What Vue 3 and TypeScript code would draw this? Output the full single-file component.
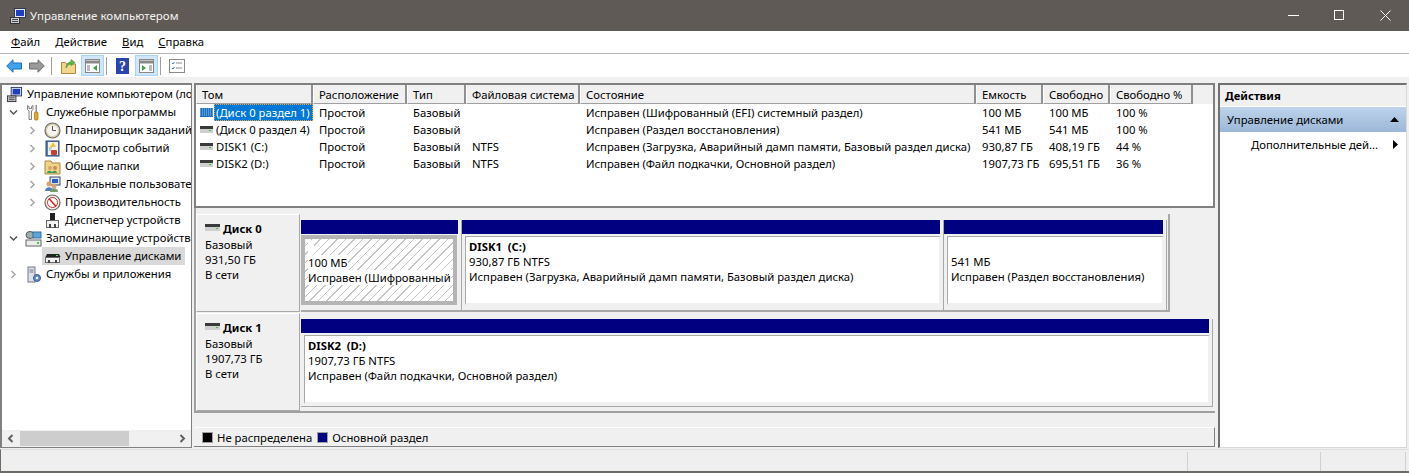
<script setup lang="ts">
const menus = [
  { k: 'Ф', r: 'айл' },
  { k: 'Д', r: 'ействие' },
  { k: 'В', r: 'ид' },
  { k: 'С', r: 'правка' }
]
const cols = [
  { t: 'Том', w: 117 }, { t: 'Расположение', w: 94 }, { t: 'Тип', w: 59 }, { t: 'Файловая система', w: 114 },
  { t: 'Состояние', w: 396 }, { t: 'Емкость', w: 67 }, { t: 'Свободно', w: 67 }, { t: 'Свободно %', w: 83 }
]
const rows = [
  ['(Диск 0 раздел 1)', 'Простой', 'Базовый', '', 'Исправен (Шифрованный (EFI) системный раздел)', '100 МБ', '100 МБ', '100 %'],
  ['(Диск 0 раздел 4)', 'Простой', 'Базовый', '', 'Исправен (Раздел восстановления)', '541 МБ', '541 МБ', '100 %'],
  ['DISK1 (C:)', 'Простой', 'Базовый', 'NTFS', 'Исправен (Загрузка, Аварийный дамп памяти, Базовый раздел диска)', '930,87 ГБ', '408,19 ГБ', '44 %'],
  ['DISK2 (D:)', 'Простой', 'Базовый', 'NTFS', 'Исправен (Файл подкачки, Основной раздел)', '1907,73 ГБ', '695,51 ГБ', '36 %']
]
const tree = [
  { t: 'Служебные программы', lvl: 1, a: 'open', i: 'tools' },
  { t: 'Планировщик заданий', lvl: 2, a: 'closed', i: 'clock' },
  { t: 'Просмотр событий', lvl: 2, a: 'closed', i: 'log' },
  { t: 'Общие папки', lvl: 2, a: 'closed', i: 'folder' },
  { t: 'Локальные пользователи и группы', lvl: 2, a: 'closed', i: 'users' },
  { t: 'Производительность', lvl: 2, a: 'closed', i: 'perf' },
  { t: 'Диспетчер устройств', lvl: 2, a: '', i: 'device' },
  { t: 'Запоминающие устройства', lvl: 1, a: 'open', i: 'storage' },
  { t: 'Управление дисками', lvl: 2, a: '', i: 'disk', sel: true },
  { t: 'Службы и приложения', lvl: 1, a: 'closed', i: 'services' }
]
</script>

<template>
  <div class="win">
    <header class="title">
      <svg class="ticon" width="18" height="18" viewBox="0 0 18 18">
        <rect x="5.500" y="1.500" width="11" height="9" fill="#e3e8f2" stroke="#2e3a58" />
        <rect x="7" y="3" width="8" height="6" fill="#1f3fc0" />
        <rect x="1.500" y="10.500" width="9" height="6" fill="#c9ccd2" stroke="#333" />
        <path d="M3 12.500h6M3 14.500h6" stroke="#444" />
      </svg>
      <span class="ttext">Управление компьютером</span>
      <div class="wbtns">
        <svg width="11" height="11" viewBox="0 0 11 11"><path d="M0 5.500h11" stroke="#fff" /></svg>
        <svg width="11" height="11" viewBox="0 0 11 11"><rect x=".5" y=".5" width="9" height="9" fill="none" stroke="#fff" /></svg>
        <svg width="11" height="11" viewBox="0 0 11 11"><path d="M.5.500l10 10M10.500.500l-10 10" stroke="#fff" /></svg>
      </div>
    </header>

    <nav class="menu">
      <span v-for="m in menus" :key="m.k"><u>{{ m.k }}</u>{{ m.r }}</span>
    </nav>

    <div class="toolbar">
      <svg class="t-back" width="16" height="14" viewBox="0 0 16 14"><path d="M.7 7L7 .8v3.200h8.500v6H7v3.200z" fill="#3fa3ee" stroke="#1e6fb5" /></svg>
      <svg class="t-fwd" width="16" height="14" viewBox="0 0 16 14"><path d="M15.300 7L9 .8v3.200H.5v6H9v3.200z" fill="#9a9a9a" stroke="#6c6c6c" /></svg>
      <i class="sep s-a"></i>
      <svg class="t-up" width="15" height="16" viewBox="0 0 15 16"><path d="M.5 4.500h4l1 1.500h9v9.500H.5z" fill="#f2d58a" stroke="#a98a3e" /><path d="M5 10c0-4 2.500-6 5-6.200V1.500l4 3-4 3V5.500c-2 .2-3.500 1.800-5 4.500z" fill="#5fb94d" stroke="#3c8a30" stroke-width=".6" /></svg>
      <span class="tbtn t-b1">
        <svg width="15" height="14" viewBox="0 0 15 14"><rect x=".5" y=".5" width="14" height="13" fill="#fff" stroke="#888" /><path d="M1 3h13" stroke="#888" stroke-width="3" /><rect x="2" y="6" width="3" height="6" fill="#bbb" /><path d="M12 6v6l-4-3z" fill="#3aa648" /></svg>
      </span>
      <i class="sep s-b"></i>
      <svg class="t-help" width="13" height="16" viewBox="0 0 13 16"><rect width="13" height="16" fill="#2c44b0" /><text x="6.500" y="13" text-anchor="middle" class="q">?</text></svg>
      <span class="tbtn t-b2">
        <svg width="15" height="14" viewBox="0 0 15 14"><rect x=".5" y=".5" width="14" height="13" fill="#fff" stroke="#888" /><path d="M1 3h13" stroke="#888" stroke-width="3" /><rect x="10" y="6" width="3" height="6" fill="#bbb" /><path d="M3 6v6l4-3z" fill="#3aa648" /></svg>
      </span>
      <i class="sep s-b2"></i>
      <svg class="t-list" width="16" height="14" viewBox="0 0 16 14"><rect x=".5" y=".5" width="15" height="13" fill="#fff" stroke="#8a8a8a" /><path d="M7 4h6M7 9h6" stroke="#8a8a8a" /><path d="M3 4l1 1 1.500-2M3 9l1 1 1.500-2" stroke="#3a79c8" fill="none" /></svg>
    </div>

    <main class="body">
      <aside class="left">
        <div class="treebox">
          <div class="tree">
            <div class="node root">
              <svg class="nicon" width="17" height="17" viewBox="0 0 18 18"><rect x="5.500" y="1.500" width="11" height="9" fill="#e3e8f2" stroke="#2e3a58" /><rect x="7" y="3" width="8" height="6" fill="#1f3fc0" /><rect x="1.500" y="10.500" width="9" height="6" fill="#c9ccd2" stroke="#333" /><path d="M3 12.500h6M3 14.500h6" stroke="#444" /></svg>
              <span class="lbl">Управление компьютером (локальный)</span>
            </div>
            <div v-for="n in tree" :key="n.t" class="node" :class="'l' + n.lvl">
              <span class="arrow">
                <svg v-if="n.a === 'open'" width="9" height="7" viewBox="0 0 9 7"><path d="M1 1.500l3.500 3.500 3.500-3.500" fill="none" stroke="#555" stroke-width="1.500" /></svg>
                <svg v-if="n.a === 'closed'" width="7" height="9" viewBox="0 0 7 9"><path d="M1.500 1l3.500 3.500-3.500 3.500" fill="none" stroke="#a6a6a6" stroke-width="1.500" /></svg>
              </span>
              <span class="item" :class="{ sel: n.sel }">
                <span class="ic">
                  <svg width="17" height="17" viewBox="0 0 17 17">
                    <g v-if="n.i === 'tools'"><path d="M2.500 1.500v4l1.500 1.500v8.500h2.500V7L8 5.500v-4l-1.500 1v2H4v-2z" fill="#f4f4f4" stroke="#666" stroke-width=".8" /><rect x="9.500" y="8" width="3.500" height="8" rx="1" fill="#e7a81d" stroke="#8a6410" stroke-width=".6" /><rect x="10.500" y="1" width="1.500" height="7" fill="#8f8f8f" /></g>
                    <g v-else-if="n.i === 'clock'"><circle cx="8.500" cy="8.500" r="7.500" fill="#d9cfb0" stroke="#6e6e6e" stroke-width="1.200" /><circle cx="8.500" cy="8.500" r="5.500" fill="#f5f4ee" /><path d="M8.500 4v4.500H12" stroke="#555" fill="none" /></g>
                    <g v-else-if="n.i === 'log'"><rect x="2" y="1" width="13" height="15" fill="#5c7fb0" stroke="#2e4a78" /><rect x="4" y="2" width="10" height="13" fill="#f5f2e6" /><path d="M5 8h3M5 10h2" stroke="#8aa" /><rect x="7" y="10" width="6" height="5" rx="1" fill="#c9403a" /><path d="M9 2l3 5H6z" fill="#edc23f" /></g>
                    <g v-else-if="n.i === 'folder'"><path d="M1 3h6l1 2h8v11H1z" fill="#f0d48a" stroke="#a98a3e" /><circle cx="6" cy="10" r="2" fill="#d9a26a" /><circle cx="11" cy="10" r="2" fill="#c98a5a" /><path d="M3 15c0-3 5-3 5 0zM8 15c0-3 5-3 5 0z" fill="#3a9a55" /></g>
                    <g v-else-if="n.i === 'users'"><rect x="6" y="1" width="10" height="8" fill="#dbe5f3" stroke="#3b4a6b" /><rect x="8" y="3" width="6" height="4" fill="#2b5ec4" /><circle cx="5" cy="8" r="2.500" fill="#d9a26a" /><path d="M1 15c0-5 8-5 8 0z" fill="#4b7fc0" /><circle cx="10" cy="10" r="2.500" fill="#d6a47a" /><path d="M6 16c0-5 8-5 8 0z" fill="#7a9a6a" /></g>
                    <g v-else-if="n.i === 'perf'"><circle cx="8.500" cy="8.500" r="7.500" fill="#efece2" stroke="#6e6e6e" stroke-width="1.200" /><circle cx="8.500" cy="8.500" r="5" fill="#fff" stroke="#c33" /><path d="M5 4.500l7 8" stroke="#c22" stroke-width="1.500" /></g>
                    <g v-else-if="n.i === 'device'"><rect x="6" y="1" width="5" height="7" fill="#222" /><rect x="2.500" y="8.500" width="12" height="7" fill="#f2f2f2" stroke="#666" /><rect x="5" y="12" width="2" height="4" fill="#444" /><rect x="10" y="12" width="2" height="4" fill="#444" /></g>
                    <g v-else-if="n.i === 'storage'"><ellipse cx="5" cy="5" rx="4" ry="3.500" fill="#9fb0a8" stroke="#556" /><rect x="8" y="2" width="8" height="6" fill="#5aa6e0" stroke="#3a6a9a" /><rect x="1" y="10" width="15" height="6" fill="#ececec" stroke="#666" /><rect x="12" y="12" width="2" height="2" fill="#4c4" /></g>
                    <g v-else-if="n.i === 'disk'"><path d="M3 6h12l1.500 3H1.500z" fill="#222" /><rect x="1.500" y="9.500" width="14" height="5" fill="#f2f2f2" stroke="#666" /><rect x="4" y="12" width="2" height="3" fill="#444" /><rect x="11" y="12" width="2" height="3" fill="#444" /><rect x="12" y="7" width="2" height="1" fill="#4e4" /></g>
                    <g v-else><rect x="3" y="1" width="7" height="15" fill="#dde2ea" stroke="#778" /><path d="M4.500 4h4M4.500 6h4" stroke="#778" /><circle cx="12" cy="12" r="3.500" fill="#5f8fd0" stroke="#3a5a90" /><circle cx="12" cy="12" r="1.200" fill="#fff" /></g>
                  </svg>
                </span>
                <span class="lbl">{{ n.t }}</span>
              </span>
            </div>
          </div>
          <div class="hscroll">
            <span class="sarrow"><svg width="7" height="9" viewBox="0 0 7 9"><path d="M5.500 1L2 4.500 5.500 8" fill="none" stroke="#606060" stroke-width="2" /></svg></span>
            <span class="thumb"></span>
            <span class="sarrow end"><svg width="7" height="9" viewBox="0 0 7 9"><path d="M1.500 1L5 4.500 1.500 8" fill="none" stroke="#606060" stroke-width="2" /></svg></span>
          </div>
        </div>
      </aside>

      <section class="center">
        <div class="table">
          <div class="thead">
            <div v-for="c in cols" :key="c.t" class="th" :style="{ width: c.w + 'px' }">{{ c.t }}</div>
          </div>
          <div v-for="(r, i) in rows" :key="i" class="tr">
            <div v-for="(v, j) in r" :key="j" class="td" :class="{ first: j === 0 }" :style="{ width: cols[j].w + 'px' }">
              <template v-if="j === 0">
                <svg class="dsk" width="13" height="9" viewBox="0 0 13 9">
                  <g v-if="i === 0"><rect width="13" height="9" fill="#1c6fbe" /><path d="M0 1h13M0 3h13M0 5h13M0 7h13" stroke="#9cc7ef" stroke-dasharray="1 1" /></g>
                  <g v-else><rect y="1" width="13" height="3" fill="#3a3a3a" /><rect y="4" width="13" height="4" fill="#cfcfcf" /><rect x="9" y="5" width="2" height="1" fill="#3cc43c" /></g>
                </svg>
                <span class="vol" :class="{ focus: i === 0 }">{{ v }}</span>
              </template>
              <template v-else>{{ v }}</template>
            </div>
          </div>
        </div>

        <div class="graph">
          <div class="disk">
            <div class="dhead">
              <div class="dname">
                <svg width="15" height="8" viewBox="0 0 15 8"><rect width="15" height="3" fill="#3a3a3a" /><rect y="3" width="15" height="4" fill="#cfcfcf" /><rect x="11" y="4" width="2" height="1" fill="#3cc43c" /></svg>
                <b>Диск 0</b>
              </div>
              <div>Базовый</div>
              <div>931,50 ГБ</div>
              <div>В сети</div>
            </div>
            <div class="parts p0">
              <div class="part" style="width:161px">
                <div class="bar"></div>
                <div class="hatch">
                  <div class="ptext"><span>&nbsp;&nbsp;</span><span>100 МБ</span><span>Исправен (Шифрованный</span></div>
                </div>
              </div>
              <div class="part" style="width:482px">
                <div class="bar"></div>
                <div class="frame">
                  <div class="ptext"><b>DISK1&nbsp; (C:)</b><span>930,87 ГБ NTFS</span><span>Исправен (Загрузка, Аварийный дамп памяти, Базовый раздел диска)</span></div>
                </div>
              </div>
              <div class="part" style="width:223px">
                <div class="bar"></div>
                <div class="frame">
                  <div class="ptext"><span>&nbsp;</span><span>541 МБ</span><span>Исправен (Раздел восстановления)</span></div>
                </div>
              </div>
            </div>
          </div>
          <div class="disk">
            <div class="dhead">
              <div class="dname">
                <svg width="15" height="8" viewBox="0 0 15 8"><rect width="15" height="3" fill="#3a3a3a" /><rect y="3" width="15" height="4" fill="#cfcfcf" /><rect x="11" y="4" width="2" height="1" fill="#3cc43c" /></svg>
                <b>Диск 1</b>
              </div>
              <div>Базовый</div>
              <div>1907,73 ГБ</div>
              <div>В сети</div>
            </div>
            <div class="parts p1">
              <div class="part" style="width:912px">
                <div class="bar"></div>
                <div class="frame">
                  <div class="ptext"><b>DISK2&nbsp; (D:)</b><span>1907,73 ГБ NTFS</span><span>Исправен (Файл подкачки, Основной раздел)</span></div>
                </div>
              </div>
            </div>
          </div>
        </div>

        <div class="legend">
          <i class="sw black"></i><span>Не распределена</span>
          <i class="sw navy"></i><span>Основной раздел</span>
        </div>
      </section>

      <aside class="actions">
        <div class="ahead">Действия</div>
        <div class="asub">
          <span>Управление дисками</span>
          <svg width="9" height="5" viewBox="0 0 9 5"><path d="M4.500 0L9 5H0z" fill="#000" /></svg>
        </div>
        <div class="aitem">
          <span>Дополнительные дей...</span>
          <svg width="5" height="9" viewBox="0 0 5 9"><path d="M0 0l5 4.500L0 9z" fill="#000" /></svg>
        </div>
      </aside>
    </main>

    <footer class="status">
      <span class="s1"></span><span class="s2"></span><span class="s3"></span>
    </footer>
  </div>
</template>

<style>
html, body { margin: 0; padding: 0; overflow: hidden; }
</style>

<style scoped>
.win {
  width: 1409px; height: 473px; box-sizing: border-box; display: flex; flex-direction: column;
  background: #f0f0f0; font: 11.300px/17px "Noto Sans", sans-serif; color: #000;
  border-bottom: 2px solid #6e6a66; overflow: hidden;
}
.title { height: 31px; flex: none; background: #5f5a55; display: flex; align-items: center; padding-left: 9px; color: #fff; }
.ticon { margin-right: 3px; flex: none; }
.ttext { color: #f2f2f2; font-size: 11.500px; }
.wbtns { margin-left: auto; display: flex; gap: 35px; margin-right: 18px; align-items: center; }
.menu { height: 23px; box-sizing: border-box; flex: none; background: #fff; display: flex; gap: 15px; align-items: center; padding: 0 0 2px 11px; border-bottom: 1px solid #b5b5c0; }
.toolbar { height: 23px; flex: none; background: #fff; display: flex; align-items: center; padding-left: 6px; margin-bottom: 6px; }
.t-fwd { margin-left: 7px; }
.sep { width: 1px; height: 18px; background: #a0a0a0; flex: none; }
.s-a { margin-left: 6px; }
.t-up { margin-left: 9px; }
.t-b1 { margin-left: 5px; }
.s-b { margin-left: 2px; }
.t-help { margin-left: 9px; }
.t-b2 { margin-left: 6px; }
.s-b2 { margin-left: 2px; }
.t-list { margin-left: 8px; }
.tbtn { width: 23px; height: 21px; background: #cfe6fb; border: 1px solid #a9d4f8; box-sizing: border-box; display: flex; align-items: center; justify-content: center; flex: none; }
.q { font: bold 14px "Liberation Serif", serif; fill: #fff; }
.body { flex: 1; display: flex; min-height: 0; }
.left { width: 192px; flex: none; margin-right: 2px; }
.treebox { height: 365px; box-sizing: border-box; background: #fff; border: 1px solid #808080; border-left-width: 2px; border-top-width: 2px; display: flex; flex-direction: column; }
.tree { flex: 1; overflow: hidden; }
.node { height: 18px; display: flex; align-items: center; white-space: nowrap; }
.root { padding-left: 4px; gap: 4px; }
.lbl { padding-bottom: 2px; }
.nicon { flex: none; }
.l1 { padding-left: 5px; }
.l2 { padding-left: 24px; }
.arrow { width: 12px; display: flex; justify-content: center; flex: none; }
.item { display: flex; align-items: center; height: 18px; margin-left: 4px; padding: 0 4px 0 2px; }
.ic { width: 17px; height: 17px; margin-right: 4px; flex: none; }
.sel { background: #d9d9d9; }
.hscroll { height: 17px; flex: none; background: #f0f0f0; display: flex; align-items: center; }
.sarrow { width: 17px; display: flex; justify-content: center; }
.sarrow.end { margin-left: auto; }
.thumb { width: 109px; height: 15px; background: #cdcdcd; margin-left: 1px; }
.center { width: 1021px; flex: none; display: flex; flex-direction: column; margin-right: 3px; height: 364px; }
.table { height: 125px; flex: none; box-sizing: border-box; background: #fff; border: 2px solid #808080; }
.thead { display: flex; height: 19px; background: #f0f0f0; }
.th { box-sizing: border-box; padding-left: 5px; border-right: 2px solid #909090; border-left: 1px solid #fff; border-bottom: 1px solid #a0a0a0; line-height: 19px; white-space: nowrap; overflow: hidden; flex: none; }
.tr { display: flex; height: 17px; }
.td { box-sizing: border-box; padding-left: 6px; white-space: nowrap; line-height: 17px; overflow: hidden; flex: none; }
.td.first { padding-left: 4px; display: flex; align-items: center; gap: 1px; }
.dsk { flex: none; }
.vol { padding: 0 0 0 2px; flex: 1; }
.focus { background: #0078d7; color: #fff; outline: 1px dotted #f7a33c; outline-offset: -1px; }
.graph { height: 205px; flex: none; padding-top: 6px; box-sizing: border-box; border-bottom: 2px solid #a0a0a0; border-left: 2px solid #a0a0a0; }
.disk { display: flex; height: 99px; }
.dhead { width: 104px; height: 98px; flex: none; box-sizing: border-box; padding: 4px 0 0 8px; line-height: 15px; background: #f0f0f0; border: 1px solid #fff; border-right-color: #a8a8a8; border-bottom-color: #a8a8a8; }
.dname { display: flex; align-items: center; gap: 3px; height: 18px; }
.dname b { margin-top: 1px; }
.parts { display: flex; margin-left: 1px; padding-top: 6px; box-sizing: border-box; height: 98px; }
.p0 { border-right: 2px solid #a8a8a8; border-bottom: 2px solid #a8a8a8; padding-right: 1px; }
.part { flex: none; display: flex; flex-direction: column; padding-right: 3px; box-sizing: border-box; border-right: 1px solid #a8a8a8; }
.p1 .part { height: 88px; border-bottom: 1px solid #a8a8a8; }
.bar { height: 14px; background: #000080; flex: none; }
.frame { margin: 2px -1px 0 3px; height: 69px; box-sizing: border-box; background: #fff; border: 1px solid #a8a8a8; border-right: 2px solid #f0f0f0; border-bottom: 2px solid #f0f0f0; }
.hatch { margin: 1px 1px 0 0; height: 70px; box-sizing: border-box; border: 4px solid #b4b4b4; background: repeating-linear-gradient(-45deg, #fff 0 5px, #c4c4c4 5px 6px); }
.hatch .ptext { padding: 1px 0 0 3px; }
.ptext { display: flex; flex-direction: column; padding: 2px 0 0 3px; line-height: 15px; white-space: nowrap; overflow: hidden; }
.ptext span, .ptext b { background: #fff; align-self: flex-start; }
.legend { height: 20px; flex: none; margin-top: auto; box-sizing: border-box; display: flex; align-items: center; padding-left: 6px; gap: 4px; border-top: 1px solid #fff; border-right: 1px solid #808080; border-bottom: 1px solid #808080; }
.legend .black { margin-left: 2px; }
.sw { width: 9px; height: 9px; border: 1px solid #a0a0a0; flex: none; }
.black { background: #000; }
.navy { background: #000080; margin-left: 1px; }
.actions { width: 189px; height: 365px; flex: none; box-sizing: border-box; background: #fff; border: 1px solid #d8d8d8; border-left: 2px solid #707070; border-top: 2px solid #707070; }
.ahead { height: 21px; background: #f0f0f0; font-weight: bold; padding-left: 5px; line-height: 21px; }
.asub { height: 25px; background: linear-gradient(#bdd3ea, #9cb8d8); display: flex; align-items: center; justify-content: space-between; padding: 0 7px 0 7px; margin-top: 1px; }
.aitem { height: 25px; display: flex; align-items: center; justify-content: space-between; padding: 0 8px 1px 31px; box-sizing: border-box; }
.status { height: 22px; flex: none; box-sizing: border-box; display: flex; background: #efefef; padding-top: 2px; border-top: 1px solid #ddd; border-left: 1px solid #6e6a66; }
.s1 { width: 1186px; border-right: 1px solid #d0d0d0; }
.s2 { width: 132px; border-right: 1px solid #d0d0d0; }
.s3 { width: 84px; border-right: 1px solid #d0d0d0; }
</style>
